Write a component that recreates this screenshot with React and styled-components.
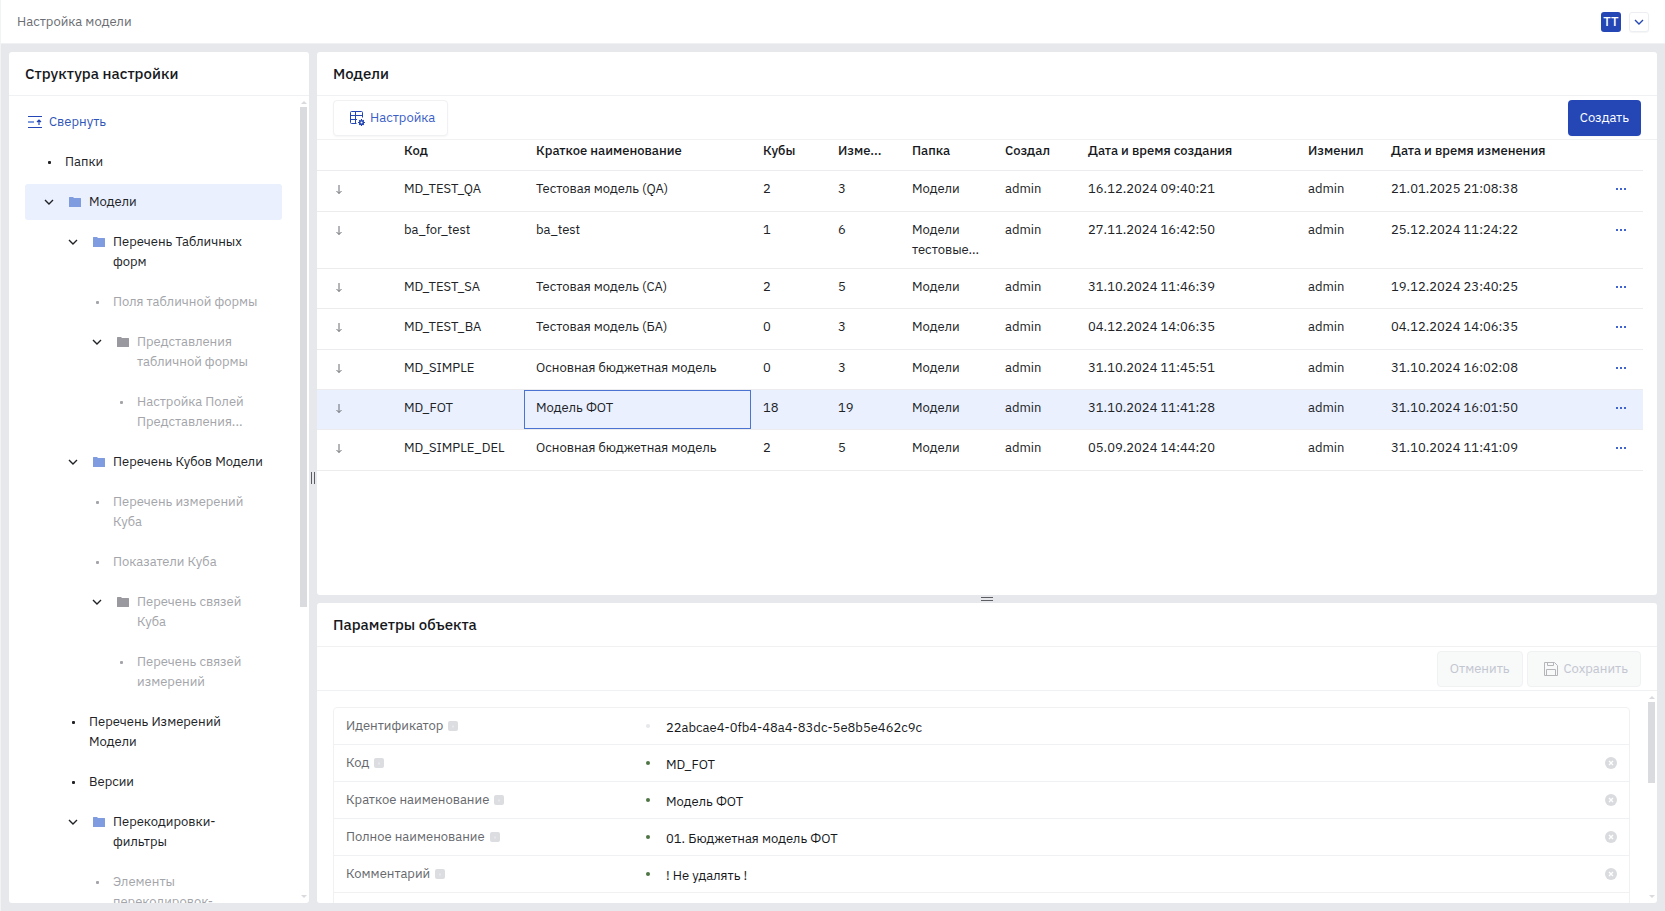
import React from "react";
import styled, { createGlobalStyle, css } from "styled-components";

const GlobalStyle = createGlobalStyle`
  * {
    box-sizing: border-box;
  }

  body {
    margin: 0;
    background: #e6e8ec;
    color: #202226;
    font-family: "IBM Plex Sans", "Noto Sans", "Open Sans", sans-serif;
    font-size: 13px;
    line-height: 20px;
  }

  button,
  input {
    font: inherit;
  }

  svg {
    display: block;
    flex-shrink: 0;
  }
`;

const Page = styled.div`
  display: flex;
  flex-direction: column;
  height: 100vh;
  border-left: 1px solid #f2f3f5;
`;

const TopBar = styled.header`
  align-items: center;
  background: #ffffff;
  border-bottom: 1px solid #f0f1f3;
  display: flex;
  flex-shrink: 0;
  gap: 8px;
  height: 44px;
  padding: 0 16px;
`;

const Crumb = styled.span`
  color: #6b6d72;
  flex: 1;
`;

const Avatar = styled.span`
  background: #2447b5;
  border-radius: 3px;
  color: #ffffff;
  font-weight: 500;
  height: 20px;
  text-align: center;
  width: 20px;
`;

const UserMenu = styled.button`
  align-items: center;
  background: #ffffff;
  border: 1px solid #eceef1;
  border-radius: 3px;
  box-shadow: 0 1px 1px rgba(0, 0, 0, 0.04);
  color: #2447b5;
  cursor: pointer;
  display: flex;
  height: 20px;
  justify-content: center;
  padding: 0;
  width: 20px;
`;

const Workspace = styled.main`
  display: flex;
  flex: 1;
  min-height: 0;
  padding: 8px;
`;

const Panel = styled.section`
  background: #ffffff;
  border-radius: 3px;
  display: flex;
  flex: ${(props) => props.$flex};
  flex-direction: column;
  min-height: 0;
  min-width: 0;
  overflow: hidden;
`;

const PanelTitle = styled.h2`
  border-bottom: 1px solid #f0f1f3;
  color: #16181c;
  flex-shrink: 0;
  font-size: 15px;
  font-weight: 500;
  line-height: 20px;
  margin: 0;
  padding: 12px 16px 11px;
`;

const PanelBody = styled.div`
  display: flex;
  flex: 1;
  min-height: 0;
`;

const Column = styled.div`
  display: flex;
  flex: 1;
  flex-direction: column;
  min-width: 0;
`;

const Splitter = styled.div`
  align-items: center;
  display: flex;
  flex: 0 0 8px;
  flex-direction: ${(props) => (props.$vertical ? "row" : "column")};
  gap: 2px;
  justify-content: center;

  &::before,
  &::after {
    background: #5c5e63;
    content: "";
    height: ${(props) => (props.$vertical ? "12px" : "1px")};
    width: ${(props) => (props.$vertical ? "1px" : "12px")};
  }
`;

const ScrollTrack = styled.div`
  align-items: center;
  color: #d9dade;
  display: flex;
  flex: 0 0 7px;
  flex-direction: column;
  gap: 3px;
  justify-content: space-between;
  margin-right: 2px;
  padding: 5px 0;
`;

const ScrollThumb = styled.div`
  background: #dadbdf;
  flex: 0 0 ${(props) => props.$size};
  margin-bottom: auto;
  width: 7px;
`;

/* Tree */

const TreeArea = styled.div`
  flex: 1;
  min-width: 0;
  overflow: hidden;
  padding: 8px 18px 0 16px;
`;

const CollapseButton = styled.button`
  align-items: center;
  background: none;
  border: 0;
  color: #2f55b8;
  cursor: pointer;
  display: flex;
  gap: 6px;
  height: 36px;
  padding: 0 2px;
`;

const TreeList = styled.ul`
  display: flex;
  flex-direction: column;
  gap: 4px;
  list-style: none;
  margin: 4px 0 0;
  padding: 0;
`;

const TreeItem = styled.li`
  align-items: flex-start;
  background: ${(props) => (props.$selected ? "#eaf0fe" : "transparent")};
  border-radius: 3px;
  color: ${(props) => (props.$muted ? "#a3a5aa" : "#202226")};
  display: flex;
  padding: 8px 12px 8px ${(props) => props.$level * 24 - 8}px;
`;

const TreeMarker = styled.span`
  align-items: center;
  color: ${(props) => (props.$open ? "#202226" : "inherit")};
  display: flex;
  flex: 0 0 16px;
  height: 20px;
  justify-content: center;
  margin-right: 8px;
`;

const Bullet = styled.span`
  background: currentColor;
  border-radius: 1px;
  height: 3px;
  width: 3px;
`;

const FolderBox = styled.span`
  align-items: center;
  color: ${(props) => (props.$muted ? "#9a999f" : "#7f9ce0")};
  display: flex;
  flex: 0 0 20px;
  height: 20px;
  justify-content: center;
  margin-right: 4px;
`;

const TreeLabel = styled.span`
  white-space: pre-line;
`;

/* Toolbar */

const Toolbar = styled.div`
  border-bottom: 1px solid #f0f1f3;
  display: flex;
  flex-shrink: 0;
  gap: 4px;
  justify-content: ${(props) => props.$justify};
  padding: 4px 16px 3px;
`;

const Button = styled.button`
  align-items: center;
  background: #ffffff;
  border: 1px solid #f0f1f3;
  border-radius: 4px;
  box-shadow: 0 1px 2px rgba(0, 0, 0, 0.04);
  color: #3a5ec8;
  cursor: pointer;
  display: flex;
  gap: 5px;
  height: 36px;
  padding: 0 12px 0 ${(props) => (props.$icon ? "15px" : "12px")};

  svg {
    color: #2447b5;
  }

  ${(props) =>
    props.$primary &&
    css`
      background: #2447b5;
      border: 0;
      color: #ffffff;
    `}

  &:disabled {
    background: #f8f9f9;
    box-shadow: none;
    color: #c2c6d0;
    cursor: default;
  }
`;

/* Table */

const TableArea = styled.div`
  flex: 1;
  overflow: hidden;
  padding-right: 14px;
`;

const Table = styled.table`
  border-collapse: separate;
  border-spacing: 0;
  table-layout: fixed;
  width: 100%;
`;

const HeadCell = styled.th`
  border-bottom: 1px solid #ececee;
  color: #16181c;
  font-weight: 500;
  height: 31px;
  overflow: hidden;
  padding: 1px 12px 0;
  text-align: left;
  text-overflow: ellipsis;
  vertical-align: top;
  white-space: nowrap;
`;

const Row = styled.tr`
  background: ${(props) => (props.$selected ? "#eaf0fe" : "transparent")};
  height: 40px;

  &:nth-child(3n + 1) {
    height: 41px;
  }
`;

const Cell = styled.td`
  border-bottom: 1px solid #ececee;
  box-shadow: ${(props) => (props.$focused ? "inset 0 0 0 1px #4b73d1" : "none")};
  padding: 8px 0 8px 12px;
  vertical-align: top;
  white-space: pre-line;
`;

const ArrowCell = styled(Cell)`
  color: #6b6d72;
  padding-left: 16px;
`;

const MenuCell = styled(Cell)`
  padding-left: 0;
`;

const IconButton = styled.button`
  align-items: center;
  background: none;
  border: 0;
  color: #3f64cf;
  cursor: pointer;
  display: flex;
  height: 20px;
  justify-content: center;
  padding: 0;
  width: 100%;
`;

/* Form */

const FormArea = styled.div`
  flex: 1;
  min-width: 0;
  overflow: hidden;
  padding: 16px 18px 0 16px;
`;

const Form = styled.form`
  border: 1px solid #f0f1f3;
  border-radius: 4px 4px 0 0;
`;

const Field = styled.div`
  align-items: center;
  border-bottom: 1px solid #f0f1f3;
  display: flex;
  height: 37px;
  padding: 0 12px;
`;

const FieldLabel = styled.label`
  align-items: center;
  color: #66686d;
  display: flex;
  flex: 0 0 293px;
  gap: 5px;
`;

const StateDot = styled.span`
  background: ${(props) => (props.$locked ? "#e6e8ec" : "#4f7544")};
  border-radius: 50%;
  flex: 0 0 4px;
  height: 4px;
  margin: 0 16px 0 7px;
`;

const FieldInput = styled.input`
  background: none;
  border: 0;
  color: #16181c;
  flex: 1;
  height: 22px;
  min-width: 0;
  outline: none;
  padding: 2px 0 0;
`;

const ClearButton = styled(IconButton)`
  color: #dadbdf;
  width: 12px;
`;

const Chevron = () => (
  <svg width="10" height="6" viewBox="0 0 10 6" fill="none">
    <path d="M1 1l4 4 4-4" stroke="currentColor" strokeWidth="1.4" />
  </svg>
);

const Folder = () => (
  <svg width="12" height="10" viewBox="0 0 12 10" fill="currentColor">
    <path d="M0 .5a.5.5 0 0 1 .5-.5H4l1 1h6.500a.5.5 0 0 1 .5.5v8a.5.5 0 0 1-.5.5H.5a.5.5 0 0 1-.5-.5z" />
  </svg>
);

const CollapseIcon = () => (
  <svg width="16" height="14" viewBox="0 0 16 14" fill="none" stroke="currentColor">
    <path d="M1 1.5h14M1 12.5h14" stroke="#2447b5" />
    <path d="M1 7h6" stroke="#7f9ce0" strokeWidth="2" />
    <path d="M12 10V5M10 7l2-2 2 2" stroke="#2447b5" strokeWidth="1.2" />
  </svg>
);

const TableGearIcon = () => (
  <svg width="16" height="16" viewBox="0 0 16 16" fill="none" stroke="currentColor">
    <path d="M7.5 13.5h-5a1 1 0 0 1-1-1v-10a1 1 0 0 1 1-1h10a1 1 0 0 1 1 1v5M1.5 5.5h12M1.5 9.5H8M6.5 1.5v12" />
    <circle cx="12.5" cy="12.5" r="1.8" strokeWidth="1.6" />
    <path
      d="M12.5 9v1.5M12.5 14.5V16M9 12.5h1.5M14.5 12.500H16M10.200 10.200l.8.8M14 14l.8.8M10.200 14.800l.8-.8M14 11l.8-.8"
      strokeWidth="1.200"
    />
  </svg>
);

const SaveIcon = () => (
  <svg width="16" height="16" viewBox="0 0 16 16" fill="none">
    <path
      d="M1.5 1.5h10l3 3v10h-13zM4.5 1.5v3h6v-3M3.5 14.5v-6h9v6"
      stroke="#b4b6ba"
    />
  </svg>
);

const ArrowDown = () => (
  <svg width="12" height="20" viewBox="0 0 12 20" fill="none" stroke="currentColor">
    <path d="M6 6v8.5M3.5 12L6 14.5 8.5 12" />
  </svg>
);

const Dots = () => (
  <svg width="12" height="2" viewBox="0 0 12 2" fill="currentColor">
    <path d="M1 0h2v2H1zM5 0h2v2H5zM9 0h2v2H9z" />
  </svg>
);

const InfoIcon = () => (
  <svg width="10" height="10" viewBox="0 0 10 10">
    <rect width="10" height="10" rx="2" fill="#dcdde1" />
    <path d="M5 4.5v2" stroke="#f2f3f5" />
  </svg>
);

const ClearIcon = () => (
  <svg width="12" height="12" viewBox="0 0 12 12">
    <circle cx="6" cy="6" r="6" fill="currentColor" />
    <path d="M4 4l4 4M8 4l-4 4" stroke="#ffffff" strokeWidth="1.3" />
  </svg>
);

const Triangle = ({ down }) => (
  <svg width="6" height="3" viewBox="0 0 6 3" fill="currentColor">
    <path d={down ? "M0 0h6L3 3z" : "M0 3h6L3 0z"} />
  </svg>
);

const Scrollbar = ({ size }) => (
  <ScrollTrack>
    <Triangle />
    <ScrollThumb $size={size} />
    <Triangle down />
  </ScrollTrack>
);

const tree = [
  { label: "Папки", level: 1 },
  { label: "Модели", level: 1, folder: true, selected: true },
  { label: "Перечень Табличных\nформ", level: 2, folder: true },
  { label: "Поля табличной формы", level: 3, muted: true },
  { label: "Представления\nтабличной формы", level: 3, folder: true, muted: true },
  { label: "Настройка Полей\nПредставления...", level: 4, muted: true },
  { label: "Перечень Кубов Модели", level: 2, folder: true },
  { label: "Перечень измерений\nКуба", level: 3, muted: true },
  { label: "Показатели Куба", level: 3, muted: true },
  { label: "Перечень связей\nКуба", level: 3, folder: true, muted: true },
  { label: "Перечень связей\nизмерений", level: 4, muted: true },
  { label: "Перечень Измерений\nМодели", level: 2 },
  { label: "Версии", level: 2 },
  { label: "Перекодировки-\nфильтры", level: 2, folder: true },
  { label: "Элементы\nперекодировок-", level: 3, muted: true },
];

const columns = [
  { title: "", width: 75 },
  { title: "Код", width: 132 },
  { title: "Краткое наименование", width: 227 },
  { title: "Кубы", width: 75 },
  { title: "Изме...", width: 74 },
  { title: "Папка", width: 93 },
  { title: "Создал", width: 83 },
  { title: "Дата и время создания", width: 220 },
  { title: "Изменил", width: 83 },
  { title: "Дата и время изменения", width: 220 },
  { title: "", width: 44 },
];

const models = [
  ["MD_TEST_QA", "Тестовая модель (QA)", "2", "3", "Модели", "admin", "16.12.2024 09:40:21", "admin", "21.01.2025 21:08:38"],
  ["ba_for_test", "ba_test", "1", "6", "Модели\nтестовые...", "admin", "27.11.2024 16:42:50", "admin", "25.12.2024 11:24:22"],
  ["MD_TEST_SA", "Тестовая модель (СА)", "2", "5", "Модели", "admin", "31.10.2024 11:46:39", "admin", "19.12.2024 23:40:25"],
  ["MD_TEST_BA", "Тестовая модель (БА)", "0", "3", "Модели", "admin", "04.12.2024 14:06:35", "admin", "04.12.2024 14:06:35"],
  ["MD_SIMPLE", "Основная бюджетная модель", "0", "3", "Модели", "admin", "31.10.2024 11:45:51", "admin", "31.10.2024 16:02:08"],
  ["MD_FOT", "Модель ФОТ", "18", "19", "Модели", "admin", "31.10.2024 11:41:28", "admin", "31.10.2024 16:01:50"],
  ["MD_SIMPLE_DEL", "Основная бюджетная модель", "2", "5", "Модели", "admin", "05.09.2024 14:44:20", "admin", "31.10.2024 11:41:09"],
];

const fields = [
  { id: "uid", label: "Идентификатор", value: "22abcae4-0fb4-48a4-83dc-5e8b5e462c9c", locked: true },
  { id: "code", label: "Код", value: "MD_FOT" },
  { id: "short", label: "Краткое наименование", value: "Модель ФОТ" },
  { id: "full", label: "Полное наименование", value: "01. Бюджетная модель ФОТ" },
  { id: "comment", label: "Комментарий", value: "! Не удалять !" },
];

const SettingsTree = () => (
  <Panel $flex="0 0 300px">
    <PanelTitle>Структура настройки</PanelTitle>
    <PanelBody>
      <TreeArea>
        <CollapseButton type="button">
          <CollapseIcon />
          Свернуть
        </CollapseButton>
        <TreeList>
          {tree.map((item, i) => (
            <TreeItem key={i} $level={item.level} $muted={item.muted} $selected={item.selected}>
              <TreeMarker $open={item.folder}>{item.folder ? <Chevron /> : <Bullet />}</TreeMarker>
              {item.folder && (
                <FolderBox $muted={item.muted}>
                  <Folder />
                </FolderBox>
              )}
              <TreeLabel>{item.label}</TreeLabel>
            </TreeItem>
          ))}
        </TreeList>
      </TreeArea>
      <Scrollbar size="500px" />
    </PanelBody>
  </Panel>
);

const ModelsTable = () => (
  <TableArea>
    <Table>
      <colgroup>
        {columns.map((col, i) => (
          <col key={i} style={{ width: col.width }} />
        ))}
      </colgroup>
      <thead>
        <tr>
          {columns.map((col, i) => (
            <HeadCell key={i}>{col.title}</HeadCell>
          ))}
        </tr>
      </thead>
      <tbody>
        {models.map((model) => {
          const selected = model[0] === "MD_FOT";
          return (
            <Row key={model[0]} $selected={selected}>
              <ArrowCell>
                <ArrowDown />
              </ArrowCell>
              {model.map((value, i) => (
                <Cell key={i} $focused={selected && i === 1}>
                  {value}
                </Cell>
              ))}
              <MenuCell>
                <IconButton type="button" aria-label="Действия">
                  <Dots />
                </IconButton>
              </MenuCell>
            </Row>
          );
        })}
      </tbody>
    </Table>
  </TableArea>
);

const ObjectForm = () => (
  <FormArea>
    <Form>
      {fields.map((field) => (
        <Field key={field.id}>
          <FieldLabel htmlFor={field.id}>
            {field.label}
            <InfoIcon />
          </FieldLabel>
          <StateDot $locked={field.locked} />
          <FieldInput id={field.id} defaultValue={field.value} readOnly={field.locked} />
          {!field.locked && (
            <ClearButton type="button" aria-label="Очистить">
              <ClearIcon />
            </ClearButton>
          )}
        </Field>
      ))}
      <Field />
    </Form>
  </FormArea>
);

const App = () => {
  return (
    <Page>
      <GlobalStyle />
      <TopBar>
        <Crumb>Настройка модели</Crumb>
        <Avatar>TT</Avatar>
        <UserMenu type="button" aria-label="Меню пользователя">
          <Chevron />
        </UserMenu>
      </TopBar>
      <Workspace>
        <SettingsTree />
        <Splitter $vertical />
        <Column>
          <Panel $flex="181 1 0">
            <PanelTitle>Модели</PanelTitle>
            <Toolbar $justify="space-between">
              <Button type="button" $icon>
                <TableGearIcon />
                Настройка
              </Button>
              <Button type="button" $primary>
                Создать
              </Button>
            </Toolbar>
            <ModelsTable />
          </Panel>
          <Splitter />
          <Panel $flex="100 1 0">
            <PanelTitle>Параметры объекта</PanelTitle>
            <Toolbar $justify="flex-end">
              <Button type="button" disabled>
                Отменить
              </Button>
              <Button type="button" $icon disabled>
                <SaveIcon />
                Сохранить
              </Button>
            </Toolbar>
            <PanelBody>
              <ObjectForm />
              <Scrollbar size="81px" />
            </PanelBody>
          </Panel>
        </Column>
      </Workspace>
    </Page>
  );
};

export default App;
